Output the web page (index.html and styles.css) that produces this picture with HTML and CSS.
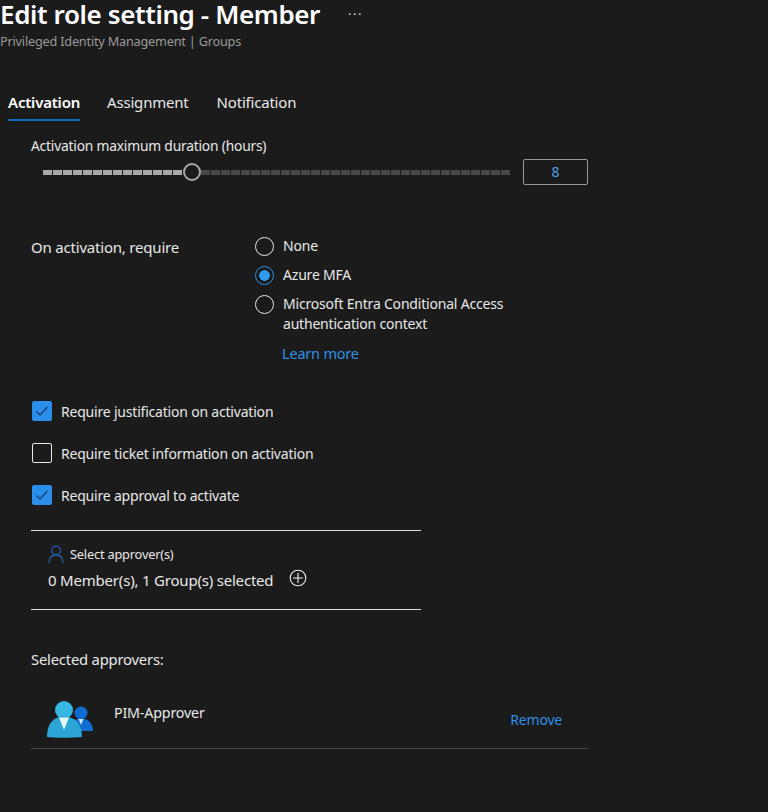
FILE: index.html
```html
<!DOCTYPE html>
<html lang="en">
<head>
  <meta charset="UTF-8">
  <meta name="viewport" content="width=device-width, initial-scale=1.0">
  <title>Edit role setting - Member</title>
  <link rel="stylesheet" href="styles.css">
</head>
<body>
  <!-- Header Section -->
  <div class="header-section">
    <div class="title-row">
      <h1>Edit role setting - Member</h1>
      <span class="more">···</span>
    </div>
    <p class="subtitle">Privileged Identity Management | Groups</p>
  </div>

  <!-- Tabs -->
  <nav class="tabs">
    <a class="tab active" href="#">Activation</a>
    <a class="tab" href="#">Assignment</a>
    <a class="tab" href="#">Notification</a>
  </nav>

  <div class="content">
    <!-- Duration Slider -->
    <div class="duration">
      <label class="duration-label">Activation maximum duration (hours)</label>
      <div class="slider-row">
        <div class="slider">
          <div class="track-done"></div>
          <div class="thumb"></div>
          <div class="track-rest"></div>
        </div>
        <div class="number-box">8</div>
      </div>
    </div>

    <!-- On activation -->
    <div class="require">
      <div class="require-label">On activation, require</div>
      <div class="radio-list">
        <div class="radio-row">
          <span class="radio"></span>
          <span>None</span>
        </div>
        <div class="radio-row">
          <span class="radio checked"></span>
          <span>Azure MFA</span>
        </div>
        <div class="radio-row">
          <span class="radio"></span>
          <span>Microsoft Entra Conditional Access<br>authentication context</span>
        </div>
        <a class="link learn-more" href="#">Learn more</a>
      </div>
    </div>

    <!-- Checkboxes -->
    <div class="checks">
      <div class="check-row">
        <span class="checkbox checked">
          <svg width="14" height="12" viewBox="0 0 14 12"><path d="M1.5 6.5 L5 10 L12.5 2" fill="none" stroke="#12406e" stroke-width="1.3"/></svg>
        </span>
        <span>Require justification on activation</span>
      </div>
      <div class="check-row">
        <span class="checkbox"></span>
        <span>Require ticket information on activation</span>
      </div>
      <div class="check-row">
        <span class="checkbox checked">
          <svg width="14" height="12" viewBox="0 0 14 12"><path d="M1.5 6.5 L5 10 L12.5 2" fill="none" stroke="#12406e" stroke-width="1.3"/></svg>
        </span>
        <span>Require approval to activate</span>
      </div>
    </div>

    <!-- Select approvers -->
    <div class="approver-box">
      <div class="select-line">
        <svg width="16" height="18" viewBox="0 0 16 18"><circle cx="8" cy="5.5" r="4.3" fill="none" stroke="#1f5fa8" stroke-width="1.3"/><path d="M1 18 C1 12.5 4 10 8 10 C12 10 15 12.5 15 18" fill="none" stroke="#1f5fa8" stroke-width="1.3"/></svg>
        <span>Select approver(s)</span>
      </div>
      <div class="selected-line">
        <span>0 Member(s), 1 Group(s) selected</span>
        <svg class="add-icon" width="18" height="18" viewBox="0 0 18 18"><circle cx="9" cy="9" r="7.8" fill="none" stroke="#eee" stroke-width="1.1"/><path d="M9 4 V14 M4 9 H14" stroke="#eee" stroke-width="1.1"/></svg>
      </div>
    </div>

    <h3 class="selected-title">Selected approvers:</h3>

    <div class="approver-row">
      <svg class="group-icon" width="46" height="37" viewBox="0 0 46 37">
        <circle cx="34" cy="12" r="6.5" fill="#0f6cd0"/>
        <path d="M24 30 C24 22 27 17.5 34 17.5 C41 17.5 46 22 46 30 Z" fill="#0f6cd0"/>
        <path d="M31.5 18 L36.5 18 L34 24 Z" fill="#cfe6f5"/>
        <circle cx="17" cy="9" r="9" fill="#37b7e4"/>
        <path d="M0 36 C0 23 6 15.5 17 15.5 C28 15.5 35 23 35 36 C24 37 9 37 0 36 Z" fill="#2aa5d6"/>
        <path d="M12 16.5 L22 16.5 L17 29 Z" fill="#e4f5fb"/>
      </svg>
      <span class="approver-name">PIM-Approver</span>
      <a class="link remove" href="#">Remove</a>
    </div>
  </div>
</body>
</html>
```
FILE: styles.css
```css
/* General Reset */
body {
  font-family: "Noto Sans", "Open Sans", Arial, sans-serif;
  margin: 0;
  padding: 0;
  background-color: #1b1b1b;
  color: #e8e8e8;
  font-size: 14px;
  letter-spacing: -0.2px;
  overflow: hidden;
}

/* Header Section */
.header-section {
  height: 62px;
}

.title-row {
  display: flex;
  align-items: center;
  height: 28px;
}

.title-row h1 {
  margin: 0;
  font-size: 26px;
  font-weight: 600;
  color: #fff;
  line-height: 28px;
  letter-spacing: -0.38px;
  white-space: nowrap;
}

.more {
  margin-left: 28px;
  font-size: 13px;
  color: #ddd;
  letter-spacing: 1.5px;
}

.subtitle {
  margin: 5px 0 0;
  font-size: 12.7px;
  line-height: 17px;
  color: #9a9a9a;
}

/* Tabs */
.tabs {
  display: flex;
  gap: 28px;
  margin: 28px 0 0 8px;
  height: 31px;
}

.tab {
  color: #e8e8e8;
  text-decoration: none;
  font-size: 15px;
  line-height: 24px;
  height: 31px;
  box-sizing: border-box;
}

.tab.active {
  color: #fff;
  font-weight: 600;
  margin-right: -1px;
  border-bottom: 2px solid #0f6cbd;
}

/* Page Content */
.content {
  padding: 15px 0 0 31px;
  width: 557px;
}

.duration-label {
  display: block;
  line-height: 20px;
  font-size: 13.8px;
}

/* Slider */
.slider-row {
  display: flex;
  align-items: center;
  margin-top: 3px;
}

.slider {
  display: flex;
  align-items: center;
  margin-left: 12px;
  width: 468px;
}

.track-done,
.track-rest {
  height: 5px;
  background-image: repeating-linear-gradient(to right, var(--seg) 0, var(--seg) 9px, transparent 9px, transparent 10px);
}

.track-done {
  --seg: #a8a8a8;
  width: 140px;
}

.track-rest {
  --seg: #484848;
  flex: 1;
}

.thumb {
  width: 14px;
  height: 14px;
  border: 2px solid #aaa;
  border-radius: 50%;
  background-color: #1b1b1b;
  flex: none;
}

.number-box {
  margin-left: 12px;
  width: 63px;
  height: 24px;
  line-height: 24px;
  border: 1px solid #999;
  border-radius: 2px;
  text-align: center;
  color: #4aa0e6;
  font-size: 14px;
}

/* On activation */
.require {
  display: flex;
  margin-top: 51px;
}

.require-label {
  width: 224px;
  line-height: 22px;
  font-size: 15px;
}

.radio-list {
  display: flex;
  flex-direction: column;
  font-size: 14px;
  line-height: 20px;
}

.radio-row {
  display: flex;
  gap: 9px;
  margin-bottom: 9px;
}

.radio {
  width: 17px;
  height: 17px;
  border: 1.5px solid #e8e8e8;
  border-radius: 50%;
  flex: none;
  position: relative;
  top: 1px;
}

.radio.checked {
  border-color: #2e8fe0;
  background: radial-gradient(circle, #2f9bf2 0, #2f9bf2 5px, transparent 5.5px);
}

.link {
  color: #2f8fe6;
  text-decoration: none;
}

.learn-more {
  margin: -1px 0 0 27px;
  font-size: 14.5px;
  line-height: 22px;
}

/* Checkboxes */
.checks {
  margin-top: 37px;
  font-size: 14px;
}

.check-row {
  display: flex;
  align-items: center;
  gap: 9px;
  height: 20px;
  margin-bottom: 22px;
  padding-left: 1px;
}

.checkbox {
  width: 18px;
  height: 18px;
  border: 1px solid #e8e8e8;
  border-radius: 2px;
  display: flex;
  align-items: center;
  justify-content: center;
  flex: none;
}

.checkbox.checked {
  background-color: #2b8eeb;
  border-color: #2b8eeb;
}

/* Select approvers */
.approver-box {
  width: 390px;
  height: 80px;
  margin-top: 25px;
  border-top: 1px solid #ddd;
  border-bottom: 1px solid #ddd;
  padding-left: 17px;
  box-sizing: border-box;
}

.select-line {
  display: flex;
  align-items: center;
  gap: 6px;
  margin-top: 14px;
  font-size: 12.8px;
  line-height: 18px;
}

.selected-line {
  display: flex;
  align-items: center;
  gap: 16px;
  margin-top: 6px;
  font-size: 15px;
  line-height: 22px;
}

.add-icon {
  margin-top: -5px;
}

/* Selected approvers */
.selected-title {
  margin: 39px 0 0;
  font-size: 14.8px;
  font-weight: 400;
  line-height: 20px;
}

.approver-row {
  display: flex;
  align-items: flex-start;
  height: 78px;
  box-sizing: border-box;
  padding-top: 30px;
  margin-top: 2px;
  border-bottom: 1px solid #444;
  width: 557px;
}

.group-icon {
  margin-left: 16px;
}

.approver-name {
  margin-left: 21px;
  margin-top: -1px;
  line-height: 26px;
  font-size: 14.3px;
}

.remove {
  margin-left: auto;
  margin-right: 26px;
  margin-top: 9px;
  font-size: 14px;
  line-height: 20px;
}
```
